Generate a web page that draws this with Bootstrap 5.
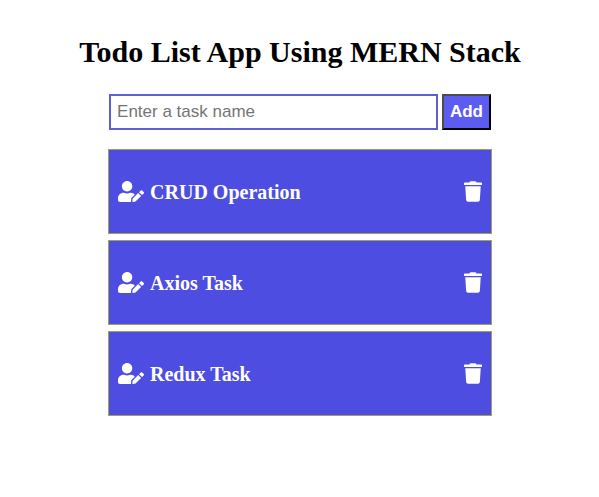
<!DOCTYPE html>
<html lang="en">
<head>
<meta charset="utf-8">
<meta name="viewport" content="width=device-width, initial-scale=1">
<title>Todo List App</title>
<link href="https://cdn.jsdelivr.net/npm/bootstrap@5.3.0/dist/css/bootstrap.min.css" rel="stylesheet">
<script src="https://cdn.jsdelivr.net/npm/bootstrap@5.3.0/dist/js/bootstrap.bundle.min.js" defer></script>
<style>
  body { font-family: "Liberation Serif", "Times New Roman", serif; color: #000; background: #fff; }
  .page { padding-left: 1px; }
  .page-title { font-size: 30px; line-height: 36px; padding-top: 34px; margin-bottom: 24px; }
  .todo { width: 64.2%; min-width: 280px; }
  .add-form { gap: 4px; padding: 0 1px; margin-bottom: 19px; }
  .task-input, .add-btn { font-family: "Liberation Sans", Arial, sans-serif; font-size: 17px; line-height: 20px; height: 36px; border-radius: 0; }
  .task-input { border: 2px solid #5e5ed6; padding: 6px; }
  .task-input::placeholder { color: #757575; }
  .add-btn { color: #fff; background: #5c5cf0; padding: 6px; border: 2px solid; border-color: #4c4c4c #000 #000 #4c4c4c; }
  .tasks { gap: 6px; }
  .task { height: 85px; padding: 0 9px; color: #fff; background: #4d4de1; border: 1px solid #a0a05a; }
  .task-name { font-size: 20px; line-height: 24px; margin: 0 6px; }
  .icon-btn { color: #fff; line-height: 0; }
  .icon-btn svg { height: 21px; fill: currentColor; }
</style>
</head>
<body>
<svg class="d-none" aria-hidden="true">
  <symbol id="user-edit" viewBox="0 0 640 512"><path d="M224 256c70.700 0 128-57.300 128-128S294.700 0 224 0 96 57.300 96 128s57.300 128 128 128zm89.600 32h-16.700c-22.200 10.200-46.900 16-72.900 16s-50.600-5.800-72.900-16h-16.700C60.200 288 0 348.200 0 422.400V464c0 26.500 21.500 48 48 48h274.900c-2.400-6.800-3.400-14-2.600-21.300l6.800-60.900 1.200-11.100 7.900-7.900 77.300-77.300c-24.500-27.700-60-45.500-99.900-45.500zm45.300 145.300l-6.800 61c-1.100 10.200 7.500 18.800 17.600 17.600l60.900-6.800 137.900-137.900-71.700-71.700-137.900 137.800zM633 268.900L595.100 231c-9.300-9.300-24.500-9.300-33.800 0l-37.800 37.800-4.100 4.100 71.800 71.700 41.800-41.800c9.300-9.400 9.300-24.500 0-33.900z"/></symbol>
  <symbol id="trash" viewBox="0 0 448 512"><path d="M432 32H312l-9.400-18.700A24 24 0 0 0 281.100 0H166.800a23.720 23.720 0 0 0-21.400 13.300L136 32H16A16 16 0 0 0 0 48v32a16 16 0 0 0 16 16h416a16 16 0 0 0 16-16V48a16 16 0 0 0-16-16zM53.200 467a48 48 0 0 0 47.900 45h245.800a48 48 0 0 0 47.900-45L416 128H32z"/></symbol>
</svg>
<main class="page d-flex flex-column align-items-center">
  <h1 class="page-title fw-bold text-center">Todo List App Using MERN Stack</h1>
  <div class="todo">
    <form class="add-form d-flex" onsubmit="return false">
      <input class="task-input flex-grow-1 w-100" type="text" placeholder="Enter a task name" aria-label="Task name">
      <button class="add-btn fw-bold" type="submit">Add</button>
    </form>
    <ul class="tasks list-unstyled d-flex flex-column mb-0">
      <li class="task d-flex align-items-center">
        <button class="icon-btn btn border-0 p-0" type="button" aria-label="Edit CRUD Operation"><svg width="26"><use href="#user-edit"/></svg></button>
        <h2 class="task-name fw-bold flex-grow-1">CRUD Operation</h2>
        <button class="icon-btn btn border-0 p-0" type="button" aria-label="Delete CRUD Operation"><svg width="18"><use href="#trash"/></svg></button>
      </li>
      <li class="task d-flex align-items-center">
        <button class="icon-btn btn border-0 p-0" type="button" aria-label="Edit Axios Task"><svg width="26"><use href="#user-edit"/></svg></button>
        <h2 class="task-name fw-bold flex-grow-1">Axios Task</h2>
        <button class="icon-btn btn border-0 p-0" type="button" aria-label="Delete Axios Task"><svg width="18"><use href="#trash"/></svg></button>
      </li>
      <li class="task d-flex align-items-center">
        <button class="icon-btn btn border-0 p-0" type="button" aria-label="Edit Redux Task"><svg width="26"><use href="#user-edit"/></svg></button>
        <h2 class="task-name fw-bold flex-grow-1">Redux Task</h2>
        <button class="icon-btn btn border-0 p-0" type="button" aria-label="Delete Redux Task"><svg width="18"><use href="#trash"/></svg></button>
      </li>
    </ul>
  </div>
</main>
</body>
</html>
